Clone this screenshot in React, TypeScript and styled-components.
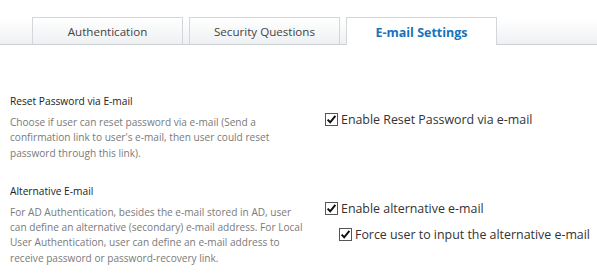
import React from "react";
import styled, { createGlobalStyle } from "styled-components";

const Global = createGlobalStyle`
  body {
    margin: 0;
    background: #fff;
    font-family: "Open Sans", "Noto Sans", sans-serif;
  }
`;

type Seccion = {
  titulo: string;
  texto: string;
  opciones: { label: string; nivel: number }[];
};

const tabs = ["Authentication", "Security Questions", "E-mail Settings"];
const activa = 2;

const secciones: Seccion[] = [
  {
    titulo: "Reset Password via E-mail",
    texto:
      "Choose if user can reset password via e-mail (Send a confirmation link to user's e-mail, then user could reset password through this link).",
    opciones: [{ label: "Enable Reset Password via e-mail", nivel: 0 }],
  },
  {
    titulo: "Alternative E-mail",
    texto:
      "For AD Authentication, besides the e-mail stored in AD, user can define an alternative (secondary) e-mail address. For Local User Authentication, user can define an e-mail address to receive password or password-recovery link.",
    opciones: [
      { label: "Enable alternative e-mail", nivel: 0 },
      { label: "Force user to input the alternative e-mail", nivel: 1 },
    ],
  },
];

const Check = () => (
  <Caja>
    <svg width="11" height="11" viewBox="0 0 11 11">
      <path d="M1.6 5.6 L4.2 8.3 L9.4 1.8" fill="none" stroke="#111" strokeWidth="2" />
    </svg>
  </Caja>
);

export default function App() {
  return (
    <>
      <Global />
      <TabStrip>
        {tabs.map((t, i) => (
          <Tab key={t} activa={i === activa}>
            {t}
          </Tab>
        ))}
      </TabStrip>
      <Contenido>
        {secciones.map((s) => (
          <Fila key={s.titulo}>
            <div>
              <Titulo>{s.titulo}</Titulo>
              <Texto>{s.texto}</Texto>
            </div>
            <Opciones>
              {s.opciones.map((o) => (
                <Opcion key={o.label} nivel={o.nivel}>
                  <Check />
                  {o.label}
                </Opcion>
              ))}
            </Opciones>
          </Fila>
        ))}
      </Contenido>
    </>
  );
}

const TabStrip = styled.div`
  display: flex;
  align-items: flex-end;
  gap: 6px;
  height: 45px;
  padding-left: 32px;
  box-sizing: border-box;
  background: linear-gradient(#ffffff 45%, #eef0f2 100%);
  border-bottom: 1px solid #cbd0d4;
`;

const Tab = styled.div<{ activa: boolean }>`
  width: 151px;
  box-sizing: border-box;
  border: 1px solid #d3d6da;
  border-bottom: none;
  margin-bottom: ${({ activa }) => (activa ? "-1px" : "0")};
  height: ${({ activa }) => (activa ? "28px" : "27px")};
  background: ${({ activa }) =>
    activa ? "#fff" : "linear-gradient(#ffffff, #eef0f2)"};
  color: ${({ activa }) => (activa ? "#1a72bb" : "#444")};
  font-weight: ${({ activa }) => (activa ? 700 : 400)};
  font-size: ${({ activa }) => (activa ? "12.5px" : "11.6px")};
  display: flex;
  align-items: center;
  justify-content: center;
  padding-top: 1px;
`;

const Contenido = styled.div`
  padding: 48px 0 0 10px;
  display: flex;
  flex-direction: column;
  gap: 22px;
`;

const Fila = styled.div`
  display: grid;
  grid-template-columns: 297px 1fr;
  column-gap: 18px;
`;

const Titulo = styled.div`
  font-size: 10.2px;
  line-height: 16px;
  color: #222;
  margin-bottom: 6px;
`;

const Texto = styled.div`
  font-size: 10.1px;
  line-height: 15.3px;
  color: #7a7a7a;
`;

const Opciones = styled.div`
  padding-top: 16px;
  display: flex;
  flex-direction: column;
  gap: 6px;
`;

const Opcion = styled.div<{ nivel: number }>`
  display: flex;
  align-items: center;
  gap: 3px;
  height: 20px;
  padding-left: ${({ nivel }) => nivel * 14}px;
  font-size: 12.4px;
  color: #333;
`;

const Caja = styled.span`
  width: 13px;
  height: 13px;
  box-sizing: border-box;
  border: 1px solid #555;
  background: #fff;
  display: flex;
  align-items: center;
  justify-content: center;
`;
